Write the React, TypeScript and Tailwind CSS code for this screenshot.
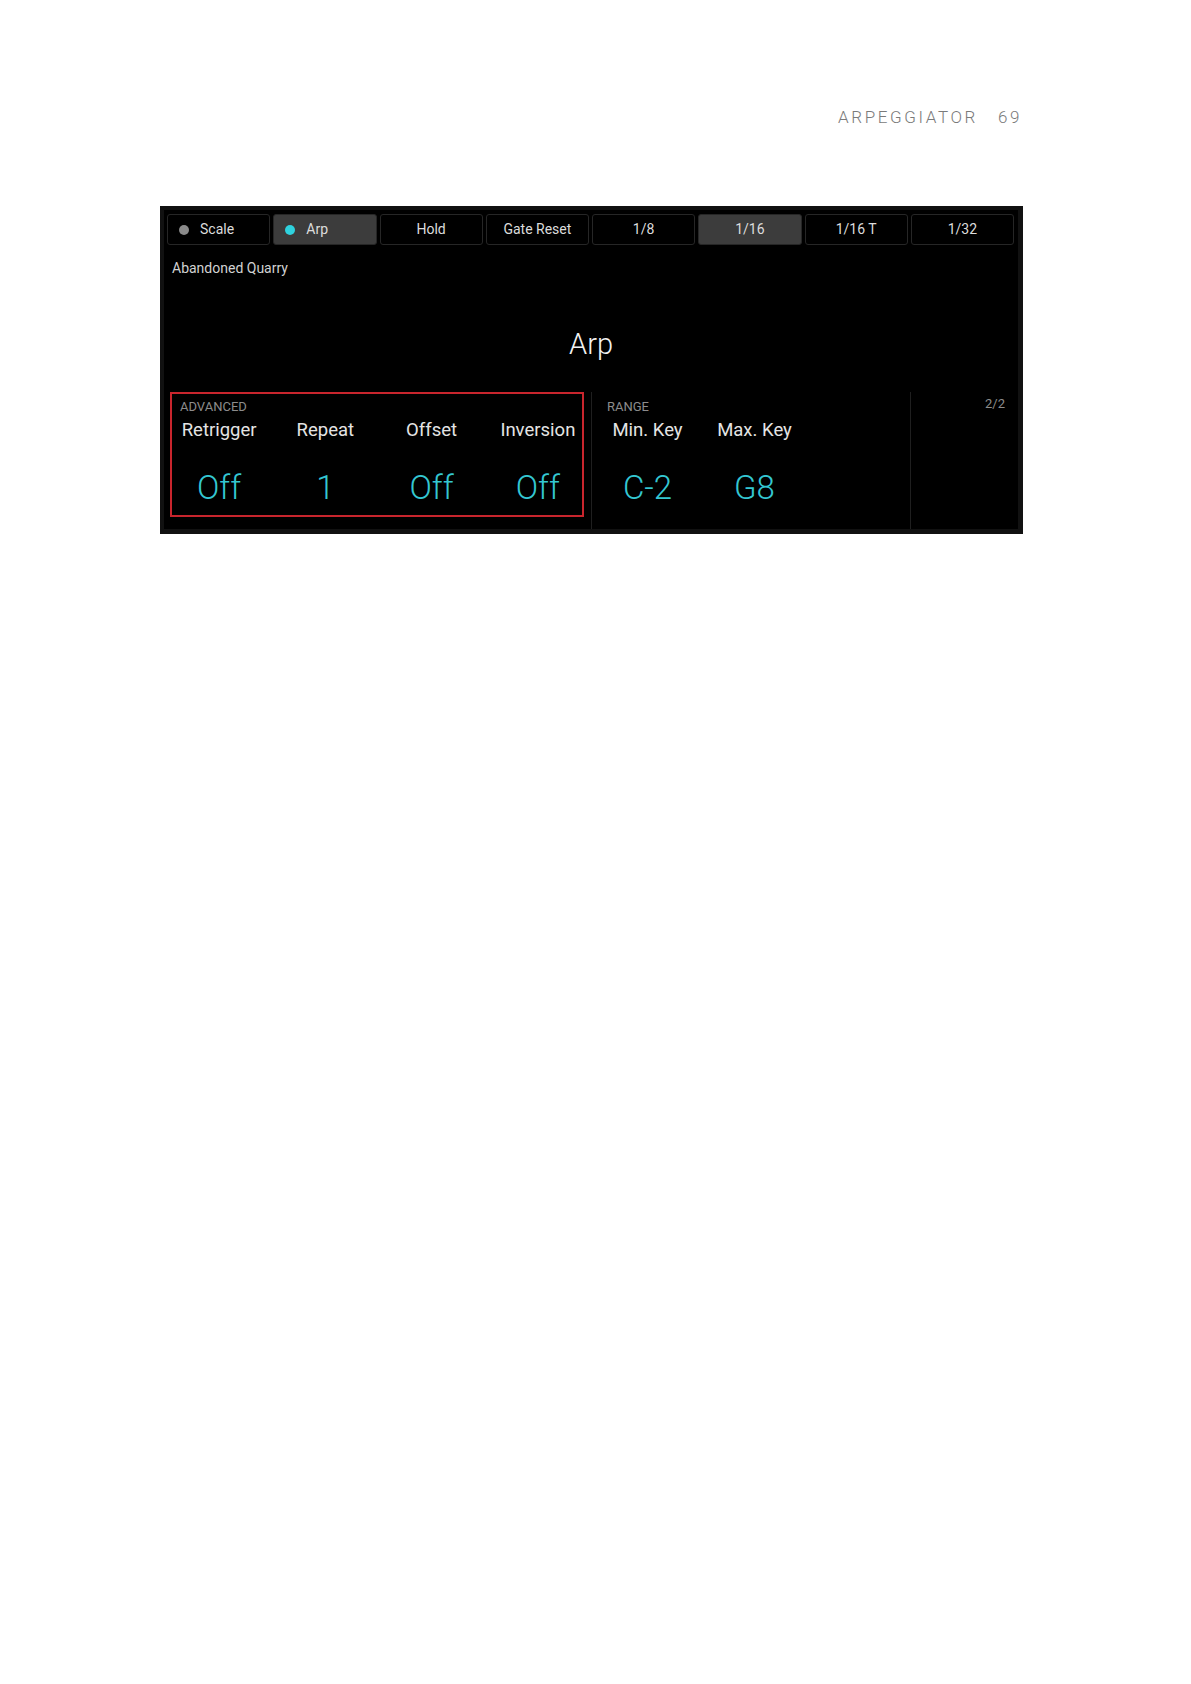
const font = "font-['Roboto','Liberation_Sans',sans-serif]";

const tabs = [
  { label: "Scale", dot: "bg-[#8a8a8a]" },
  { label: "Arp", dot: "bg-[#2fd2de]", active: true },
  { label: "Hold" },
  { label: "Gate Reset" },
  { label: "1/8" },
  { label: "1/16", active: true },
  { label: "1/16 T" },
  { label: "1/32" },
];

function Tab({ label, dot, active }: { label: string; dot?: string; active?: boolean }) {
  return (
    <div
      className={`flex h-[31px] items-center rounded-[3px] border border-[#262626] text-[14px] text-[#dcdcdc] ${
        active ? "bg-[#3c3c3c]" : "bg-black"
      } ${dot ? "pl-[11px]" : "justify-center"}`}
    >
      {dot && <span className={`mr-[11px] h-[10px] w-[10px] rounded-full ${dot}`} />}
      {label}
    </div>
  );
}

function Param({ name, value }: { name: string; value: string }) {
  return (
    <div className="flex flex-col items-center">
      <div className="h-[24px] text-[18.5px] leading-[24px] text-[#e4e4e4]">{name}</div>
      <div className="mt-[26px] h-[40px] text-[33px] font-light leading-[40px] text-[#34c7d2]">{value}</div>
    </div>
  );
}

export default function App() {
  return (
    <div className={`min-h-screen bg-white ${font}`}>
      <div className="ml-[160px] w-[863px] pt-[107px]">
        <div className="flex justify-end pr-[1px] text-[17px] font-light leading-[20px] tracking-[2.6px] text-[#7a7a7a]">
          <span>ARPEGGIATOR</span>
          <span className="ml-[20px]">69</span>
        </div>

        <div className="mt-[79px] h-[328px] bg-[#111111] pb-[5px] pl-[4px] pr-[5px] pt-[4px]">
          <div className="flex h-full flex-col bg-black">
            <div className="mt-[4px] grid grid-cols-8 gap-[3px] pl-[3px] pr-[4px]">
              {tabs.map((t) => (
                <Tab key={t.label} {...t} />
              ))}
            </div>

            <div className="ml-[8px] mt-[13px] h-[20px] text-[14px] leading-[20px] text-[#d2d2d2]">
              Abandoned Quarry
            </div>

            <div className="mt-[48px] h-[36px] text-center text-[29px] font-light leading-[36px] text-[#f2f2f2]">
              Arp
            </div>

            <div className="ml-[2px] mt-[30px] flex w-[852px] flex-1">
              <div className="relative w-[426px] border-r border-[#1f1f1f] pt-[7px]">
                <div className="ml-[14px] h-[16px] text-[13px] leading-[16px] text-[#8c8c8c]">ADVANCED</div>
                <div className="mt-[3px] grid grid-cols-4">
                  <Param name="Retrigger" value="Off" />
                  <Param name="Repeat" value="1" />
                  <Param name="Offset" value="Off" />
                  <Param name="Inversion" value="Off" />
                </div>
                <div className="absolute left-[4px] top-0 h-[125px] w-[414px] border-2 border-[#c9252d]" />
              </div>

              <div className="w-[319px] border-r border-[#1f1f1f] pl-[2px] pt-[7px]">
                <div className="ml-[13px] h-[16px] text-[13px] leading-[16px] text-[#8c8c8c]">RANGE</div>
                <div className="mt-[3px] grid grid-cols-[107px_107px]">
                  <Param name="Min. Key" value="C-2" />
                  <Param name="Max. Key" value="G8" />
                </div>
              </div>

              <div className="flex-1 pr-[13px] pt-[4px] text-right text-[13px] leading-[16px] text-[#8c8c8c]">
                2/2
              </div>
            </div>
          </div>
        </div>
      </div>
    </div>
  );
}
